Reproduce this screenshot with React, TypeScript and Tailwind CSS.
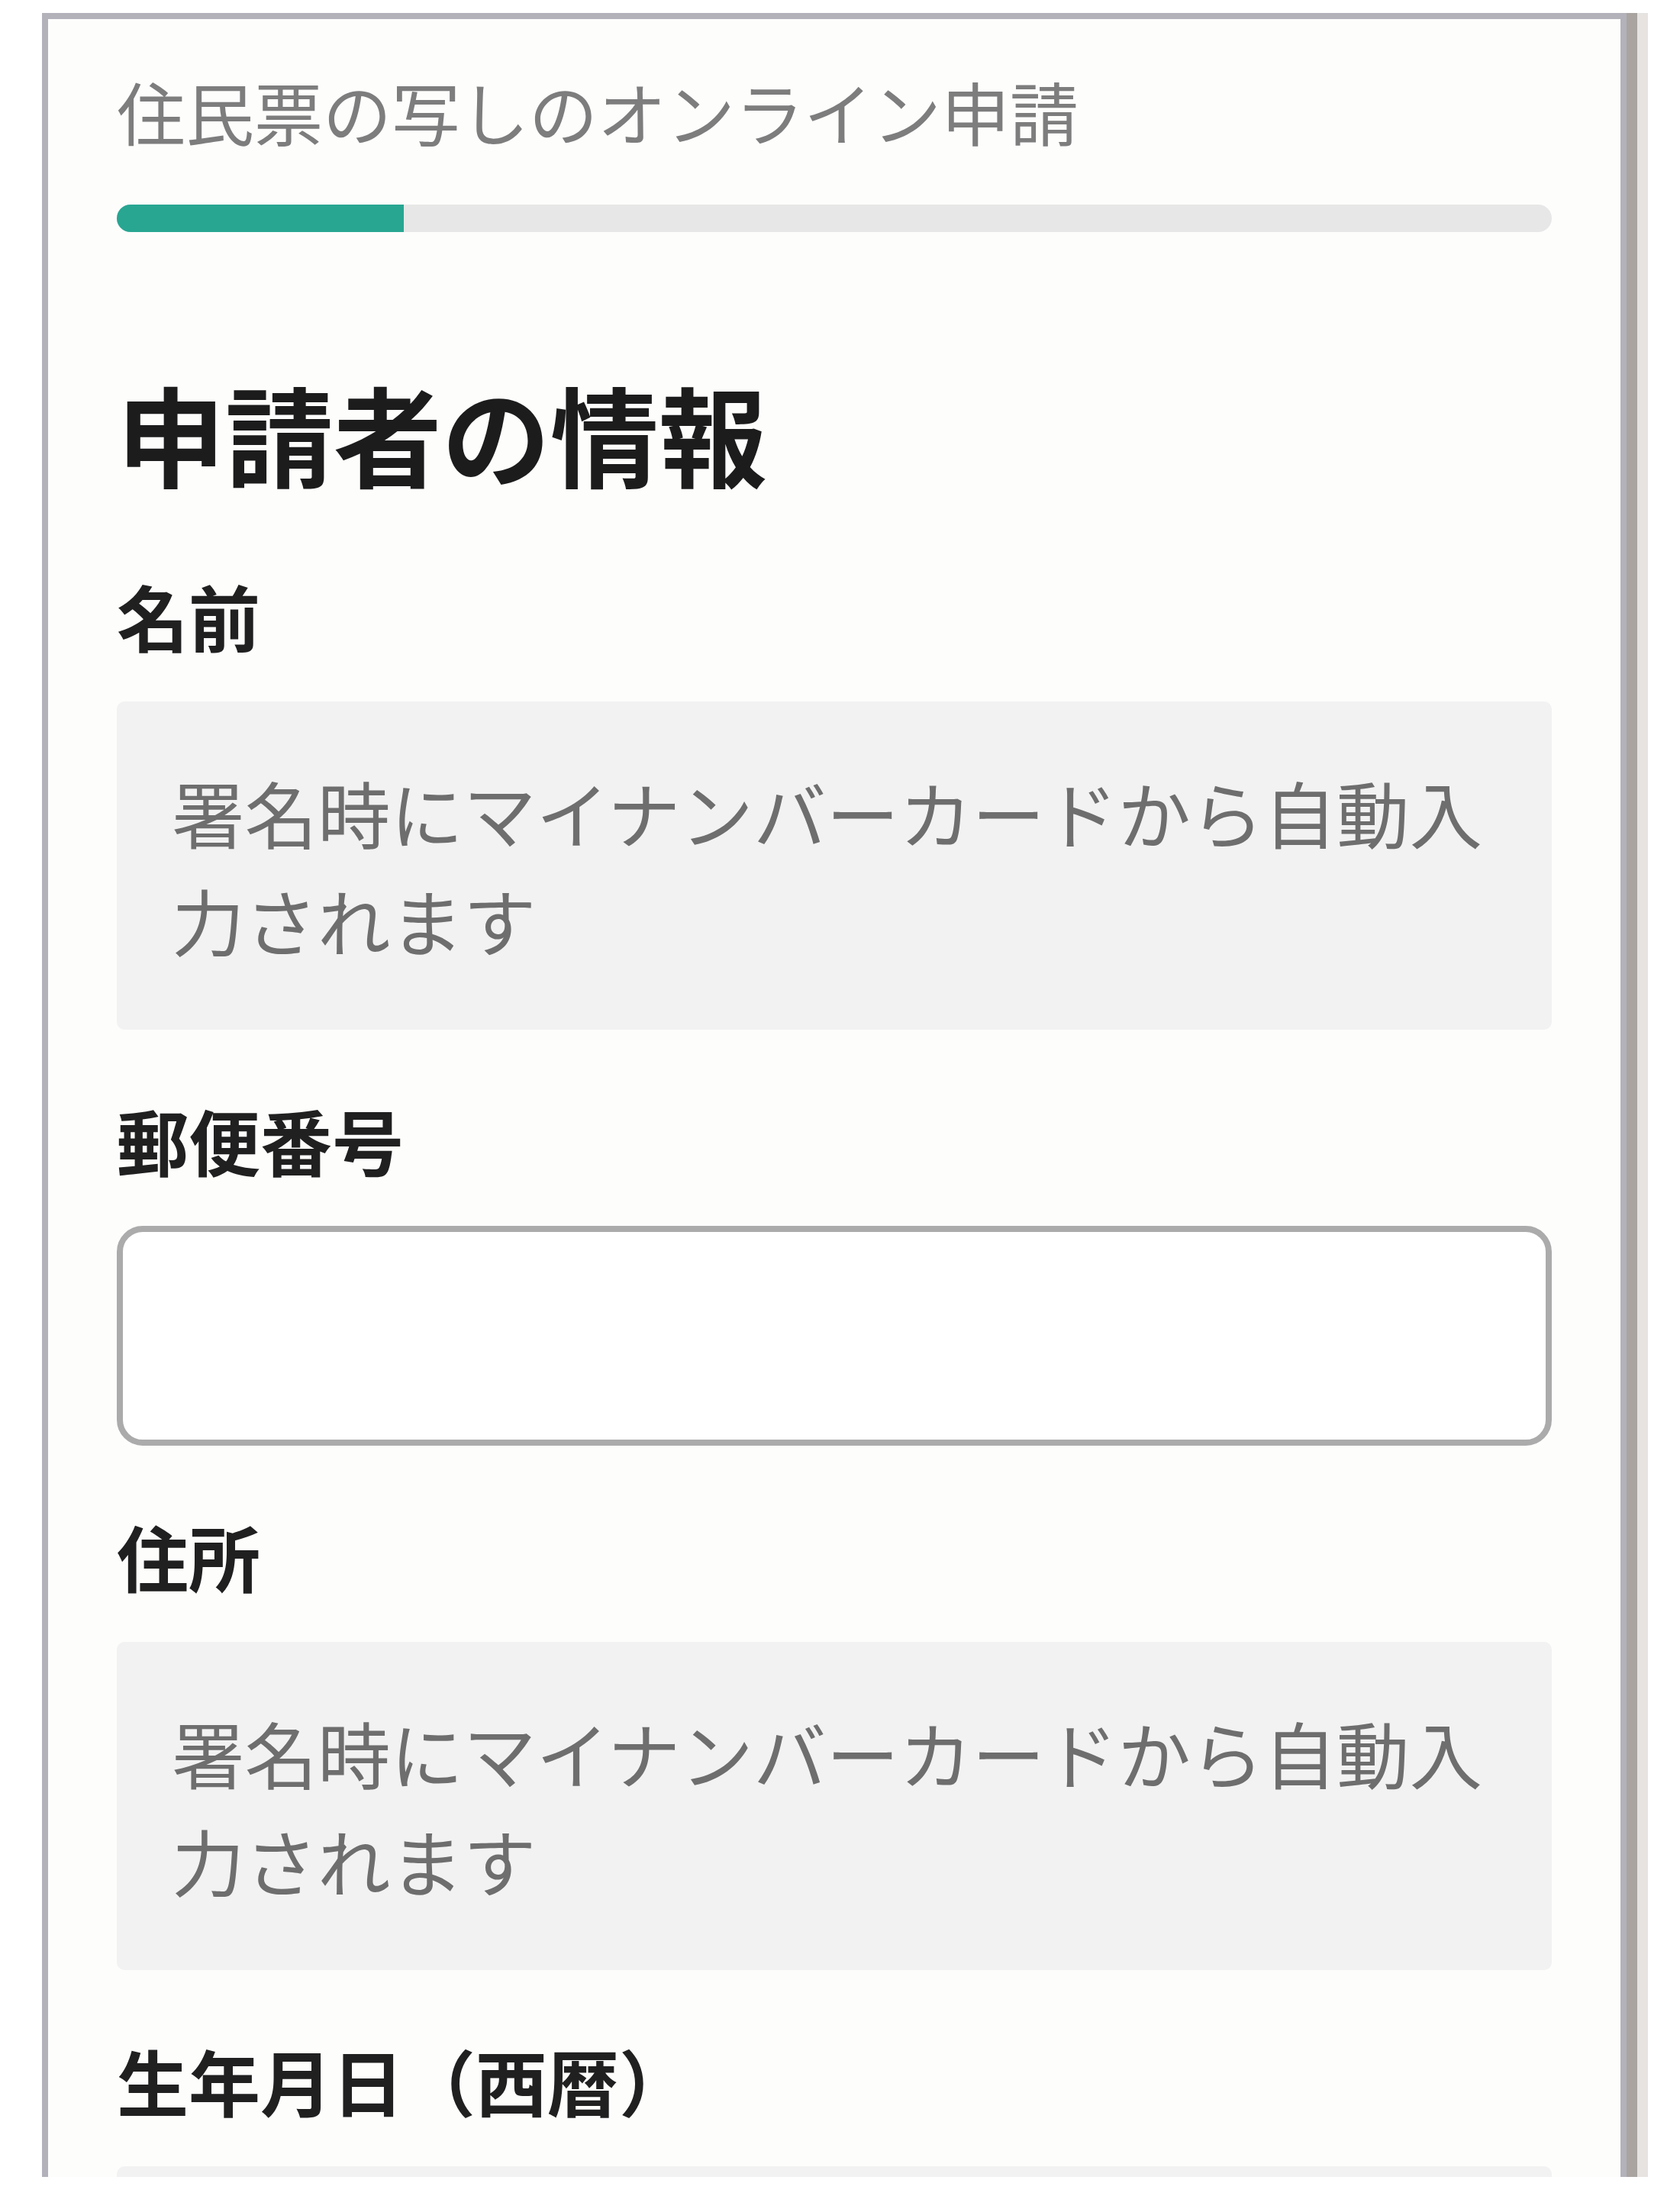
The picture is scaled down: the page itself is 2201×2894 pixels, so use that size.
import React from 'react';

const fieldLabel = 'text-[94px] leading-[141px] font-bold text-[#202020]';

function AutoFillBox() {
  return (
    <div className="rounded-[10px] bg-[#f2f2f2] pl-[72px] pr-[72px] py-[74px] text-[95.5px] leading-[141px] text-[#6e6e6e]">
      署名時にマイナンバーカードから自動入力されます
    </div>
  );
}

function Field({ label, children }: { label: string; children: React.ReactNode }) {
  return (
    <div className="flex flex-col gap-[42px]">
      <div className={fieldLabel}>{label}</div>
      {children}
    </div>
  );
}

export default function App() {
  return (
    <div
      className="w-[2201px] h-[2894px] overflow-hidden bg-white pt-[17px] pl-[55px]"
      style={{ fontFamily: '"Noto Sans CJK JP", "Noto Sans", sans-serif' }}
    >
      <div className="w-[2076px] h-[2835px] overflow-hidden border-8 border-b-0 border-[#b3b1ba] bg-[#fdfdfc] px-[90px] pt-[53px] shadow-[14px_0_0_#aaa4a1,28px_0_0_#e6e3e1]">
        <div className="text-[90px] leading-[135px] text-[#7d7d7d]">住民票の写しのオンライン申請</div>

        <div className="mt-[55px] h-[36px] w-full overflow-hidden rounded-full bg-[#e7e7e7]">
          <div className="h-full w-1/5 bg-[#28a692]" />
        </div>

        <h1 className="mt-[164px] text-[142px] leading-[196px] font-bold text-[#1c1c1c]">申請者の情報</h1>

        <div className="mt-[72px] flex flex-col gap-[74px]">
          <Field label="名前">
            <AutoFillBox />
          </Field>
          <Field label="郵便番号">
            <div className="h-[288px] rounded-[34px] border-8 border-[#ababab] bg-white" />
          </Field>
          <Field label="住所">
            <AutoFillBox />
          </Field>
          <Field label="生年月日（西暦）">
            <div className="h-[288px] rounded-[10px] bg-[#f2f2f2]" />
          </Field>
        </div>
      </div>
    </div>
  );
}
